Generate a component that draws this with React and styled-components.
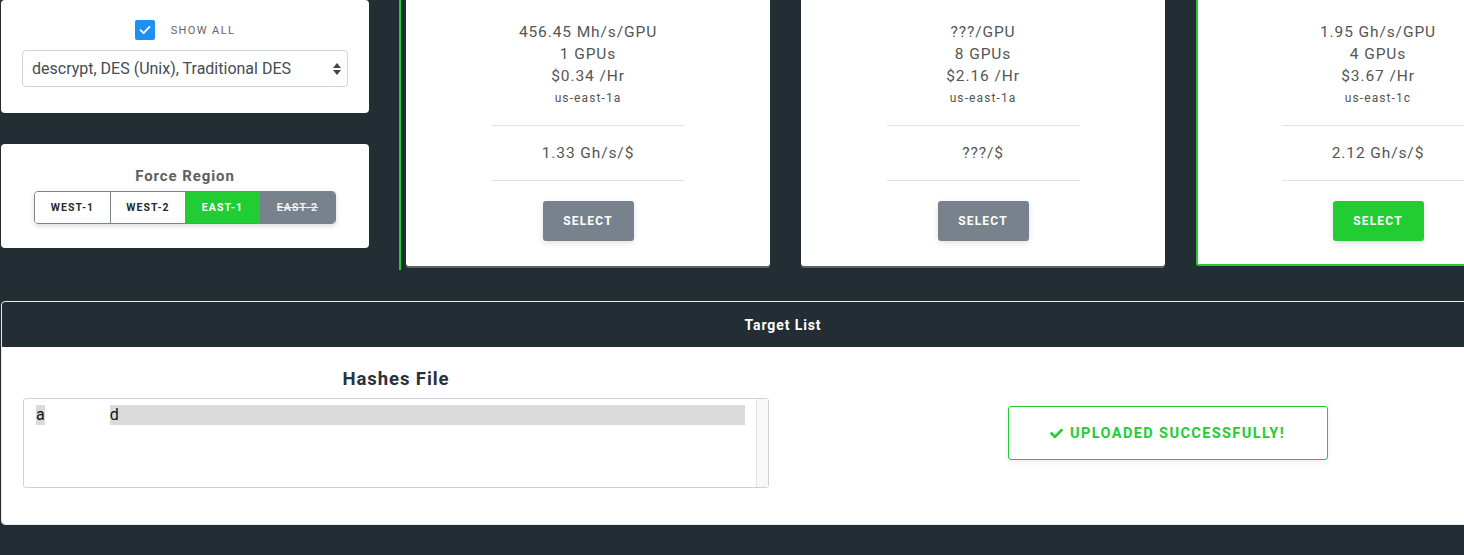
import React from "react"
import styled, { createGlobalStyle } from "styled-components"
import { FaCheck } from "react-icons/fa"

const GlobalStyle = createGlobalStyle`
  html, body {
    margin: 0;
    padding: 0;
    background: #222d34;
    overflow: hidden;
  }
  body {
    font-family: Roboto, "Liberation Sans", Arial, sans-serif;
  }
`

const instances = [
  { rate: "456.45 Mh/s/GPU", gpus: "1 GPUs", price: "$0.34 /Hr", zone: "us-east-1a", value: "1.33 Gh/s/$" },
  { rate: "???/GPU", gpus: "8 GPUs", price: "$2.16 /Hr", zone: "us-east-1a", value: "???/$" },
  { rate: "1.95 Gh/s/GPU", gpus: "4 GPUs", price: "$3.67 /Hr", zone: "us-east-1c", value: "2.12 Gh/s/$", selected: true },
]

const regions = [
  { label: "WEST-1" },
  { label: "WEST-2", divider: true },
  { label: "EAST-1", active: true },
  { label: "EAST-2", disabled: true },
]

const App = () => {
  return (
    <Page>
      <GlobalStyle />
      <TopRow>
        <Sidebar>
          <Panel $pt={20} $pb={26}>
            <ShowAll>
              <CheckBox>
                <svg width="14" height="14" viewBox="0 0 14 14">
                  <polyline points="2.5,7.2 5.6,10.2 11.5,3.8" fill="none" stroke="#fff" strokeWidth="1.8" strokeLinecap="round" strokeLinejoin="round" />
                </svg>
              </CheckBox>
              <span>SHOW ALL</span>
            </ShowAll>
            <SelectBox>
              <span>descrypt, DES (Unix), Traditional DES</span>
              <svg width="8" height="14" viewBox="0 0 8 14">
                <polygon points="4,1 8,6 0,6" fill="#444" />
                <polygon points="0,8 8,8 4,13" fill="#444" />
              </svg>
            </SelectBox>
          </Panel>
          <Panel $pt={22} $pb={24}>
            <PanelTitle>Force Region</PanelTitle>
            <RegionGroup>
              {regions.map(r => (
                <RegionButton key={r.label} $active={r.active} $disabled={r.disabled} $divider={r.divider}>
                  {r.label}
                </RegionButton>
              ))}
            </RegionGroup>
          </Panel>
        </Sidebar>

        <CardStrip>
          {instances.map((item, i) => (
            <InstanceCard key={i} $selected={item.selected}>
              <Stat>{item.rate}</Stat>
              <Stat>{item.gpus}</Stat>
              <Stat>{item.price}</Stat>
              <Zone>{item.zone}</Zone>
              <Value>{item.value}</Value>
              <SelectButton $selected={item.selected}>SELECT</SelectButton>
            </InstanceCard>
          ))}
        </CardStrip>
      </TopRow>

      <TargetPanel>
        <TargetHeader>Target List</TargetHeader>
        <TargetBody>
          <Half>
            <HashesTitle>Hashes File</HashesTitle>
            <HashBox>
              <HashLines>
                <HashLine>
                  a<Redacted />d
                </HashLine>
              </HashLines>
              <ScrollTrack />
            </HashBox>
          </Half>
          <Half $center>
            <SuccessBox>
              <FaCheck size={13} />
              UPLOADED SUCCESSFULLY!
            </SuccessBox>
          </Half>
        </TargetBody>
      </TargetPanel>
    </Page>
  )
}

const Page = styled.div`
  width: 1564px;
  padding: 0 0 31px 1px;
`

const TopRow = styled.div`
  display: flex;
  align-items: flex-start;
  gap: 30px;
`

const Sidebar = styled.div`
  width: 368px;
  display: flex;
  flex-direction: column;
  gap: 31px;
`

const Panel = styled.div`
  background: #fff;
  border-radius: 4px;
  padding: ${p => p.$pt}px 21px ${p => p.$pb}px;
  display: flex;
  flex-direction: column;
  align-items: center;
`

const ShowAll = styled.div`
  display: flex;
  align-items: center;
  gap: 16px;
  height: 20px;
  margin-bottom: 10px;
  font-size: 11px;
  letter-spacing: 1.4px;
  color: #666;
`

const CheckBox = styled.span`
  width: 20px;
  height: 20px;
  border-radius: 2px;
  background: #1e8ff5;
  display: flex;
  align-items: center;
  justify-content: center;
`

const SelectBox = styled.div`
  box-sizing: border-box;
  width: 326px;
  height: 37px;
  border: 1px solid #cfd4da;
  border-radius: 4px;
  padding: 0 6px 0 9px;
  display: flex;
  align-items: center;
  justify-content: space-between;
  font-size: 16px;
  color: #454c53;
`

const PanelTitle = styled.div`
  font-size: 15px;
  line-height: 20px;
  font-weight: 700;
  letter-spacing: 0.9px;
  color: #5f5f5f;
  margin-bottom: 5px;
`

const RegionGroup = styled.div`
  display: flex;
  border: 1px solid #7a828b;
  border-radius: 4px;
  overflow: hidden;
  box-shadow: 0 2px 5px rgba(0, 0, 0, 0.15);
`

const RegionButton = styled.div`
  box-sizing: border-box;
  width: 75px;
  height: 31px;
  display: flex;
  align-items: center;
  justify-content: center;
  font-size: 10.5px;
  font-weight: 700;
  letter-spacing: 1.1px;
  color: ${p => (p.$active ? "#fff" : p.$disabled ? "#eef0f2" : "#2a2a2a")};
  background: ${p => (p.$active ? "#22cc33" : p.$disabled ? "#78828c" : "#fff")};
  text-decoration: ${p => (p.$disabled ? "line-through" : "none")};
  border-left: ${p => (p.$divider ? "1px solid #7a828b" : "none")};
`

const CardStrip = styled.div`
  display: flex;
  gap: 31px;
  border-left: 2px solid #22cc33;
  padding: 0 0 4px 5px;
`

const InstanceCard = styled.div`
  box-sizing: border-box;
  width: 364px;
  height: 266px;
  background: #fff;
  border: ${p => (p.$selected ? "2px solid #22cc33" : "none")};
  border-top: none;
  box-shadow: ${p => (p.$selected ? "none" : "0 2px 0 #5e6062")};
  border-radius: 0 0 3px 3px;
  padding-top: 21px;
  display: flex;
  flex-direction: column;
  align-items: center;
  color: #555;
`

const Stat = styled.div`
  font-size: 15.5px;
  line-height: 22px;
  letter-spacing: 0.9px;
`

const Zone = styled.div`
  font-size: 12px;
  line-height: 22px;
  letter-spacing: 1.1px;
  padding-bottom: 16px;
  border-bottom: 1px solid #dee3e7;
  width: 193px;
  text-align: center;
`

const Value = styled.div`
  width: 193px;
  height: 54px;
  display: flex;
  align-items: center;
  justify-content: center;
  font-size: 15.5px;
  letter-spacing: 0.9px;
  border-bottom: 1px solid #dee3e7;
`

const SelectButton = styled.div`
  margin-top: 20px;
  width: 91px;
  height: 40px;
  border-radius: 3px;
  display: flex;
  align-items: center;
  justify-content: center;
  font-size: 12px;
  font-weight: 700;
  letter-spacing: 1.2px;
  color: #fff;
  background: ${p => (p.$selected ? "#22cc33" : "#78828c")};
  box-shadow: 0 2px 6px rgba(0, 0, 0, 0.12);
`

const TargetPanel = styled.div`
  margin-top: 31px;
  border: 1px solid #e6e9eb;
  border-radius: 4px;
  overflow: hidden;
`

const TargetHeader = styled.div`
  height: 45px;
  display: flex;
  align-items: center;
  justify-content: center;
  color: #fff;
  font-size: 14px;
  font-weight: 700;
  letter-spacing: 0.9px;
`

const TargetBody = styled.div`
  background: #fff;
  display: grid;
  grid-template-columns: 1fr 1fr;
  padding: 19px 0 36px;
`

const Half = styled.div`
  display: flex;
  flex-direction: column;
  align-items: ${p => (p.$center ? "center" : "flex-start")};
  justify-content: flex-start;
  padding: ${p => (p.$center ? "40px 12px 0 0" : "0 0 0 21px")};
`

const HashesTitle = styled.div`
  width: 746px;
  text-align: center;
  font-size: 18.5px;
  line-height: 26px;
  font-weight: 700;
  letter-spacing: 0.9px;
  color: #27323a;
  margin-bottom: 6px;
`

const HashBox = styled.div`
  box-sizing: border-box;
  width: 746px;
  height: 90px;
  border: 1px solid #ced2d8;
  border-radius: 3px;
  display: flex;
`

const HashLines = styled.div`
  flex: 1;
  padding: 6px 11px 0 12px;
`

const HashLine = styled.div`
  height: 20px;
  background: #dadada;
  font-size: 16px;
  line-height: 20px;
  color: #111;
  display: flex;
  align-items: center;
`

const Redacted = styled.span`
  display: inline-block;
  width: 65px;
  height: 20px;
  background: #fff;
`

const ScrollTrack = styled.div`
  width: 11px;
  background: #f8f8f8;
  border-left: 1px solid #e4e4e4;
`

const SuccessBox = styled.div`
  box-sizing: border-box;
  width: 320px;
  height: 54px;
  border: 1px solid #22cc33;
  border-radius: 3px;
  display: flex;
  align-items: center;
  justify-content: center;
  gap: 7px;
  color: #22cc33;
  font-size: 14.5px;
  font-weight: 700;
  letter-spacing: 1.4px;
  box-shadow: 0 2px 6px rgba(0, 0, 0, 0.08);
`

export default App
